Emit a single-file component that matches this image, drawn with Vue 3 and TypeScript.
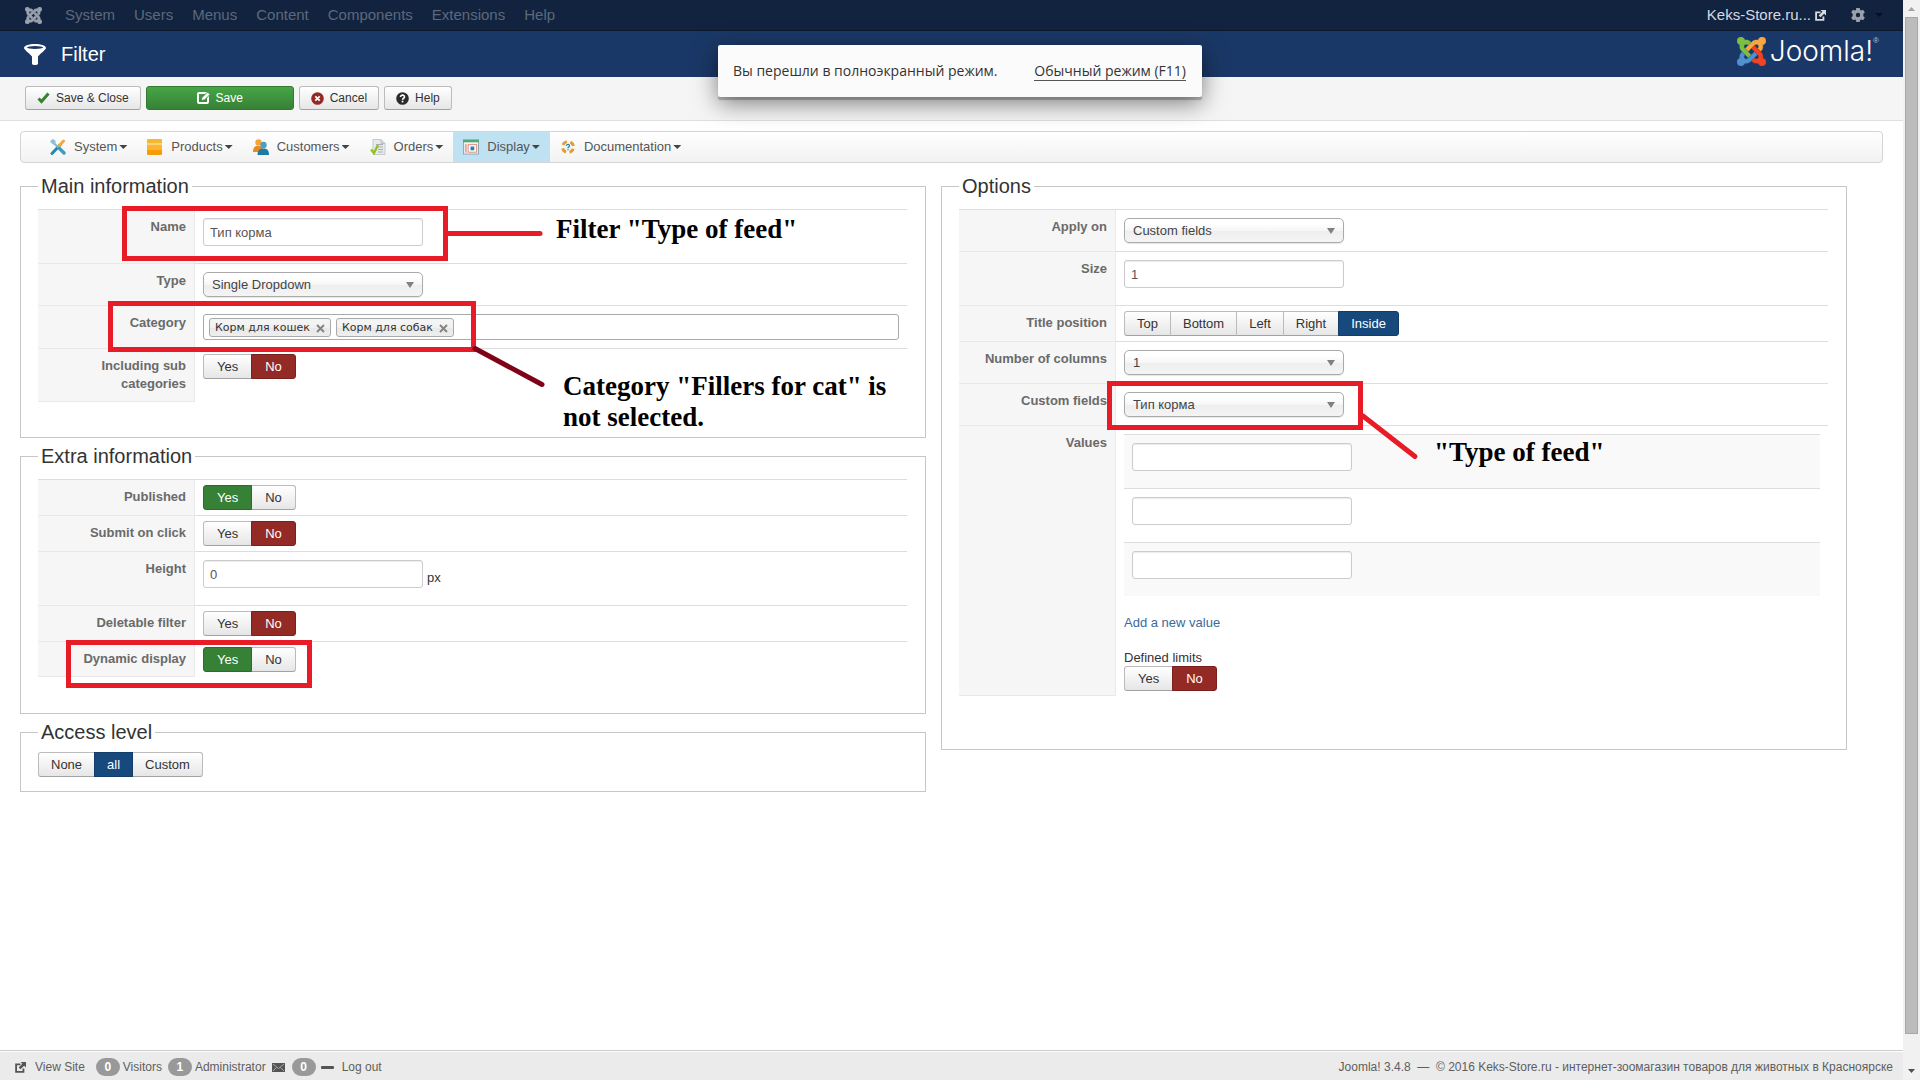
<script setup lang="ts">
import { reactive, ref } from 'vue'

interface MenuItem {
  label: string
  icon: string
  active?: boolean
}

const topNav: string[] = ['System', 'Users', 'Menus', 'Content', 'Components', 'Extensions', 'Help']

const menu: MenuItem[] = [
  { label: 'System', icon: 'tools' },
  { label: 'Products', icon: 'box' },
  { label: 'Customers', icon: 'people' },
  { label: 'Orders', icon: 'order' },
  { label: 'Display', icon: 'window', active: true },
  { label: 'Documentation', icon: 'help' },
]

const yesNo = ['Yes', 'No']
const positions = ['Top', 'Bottom', 'Left', 'Right', 'Inside']
const accessLevels = ['None', 'all', 'Custom']

const form = reactive({
  name: 'Тип корма',
  type: 'Single Dropdown',
  subCategories: 'No',
  published: 'Yes',
  submitOnClick: 'No',
  height: '0',
  deletable: 'No',
  dynamic: 'Yes',
  access: 'all',
  applyOn: 'Custom fields',
  size: '1',
  titlePosition: 'Inside',
  columns: '1',
  customField: 'Тип корма',
  limits: 'No',
})

const categories = ref<string[]>(['Корм для кошек', 'Корм для собак'])
const values = ref<string[]>(['', '', ''])

function removeCategory(name: string): void {
  categories.value = categories.value.filter((c) => c !== name)
}

function tone(option: string): string {
  if (option === 'Yes') return 'green'
  if (option === 'No') return 'red'
  return 'blue'
}
</script>

<template>
  <div class="screen">
    <div class="page">
      <nav class="topbar">
        <a href="#" class="brand" aria-label="Joomla">
          <svg width="17" height="17" viewBox="0 32 448 448" fill="#9aa1ac" stroke="#9aa1ac" stroke-width="16">
            <path d="M.6 92.1C.6 58.8 27.4 32 60.4 32c30 0 54.5 21.9 59.2 50.2 32.6-7.6 67.1.6 96.5 30l-44.3 44.3c-20.5-20.5-42.6-16.3-55.4-3.5-14.3 14.3-14.3 37.9 0 52.2l99.5 99.5-44 44.3c-87.7-87.2-49.7-49.7-99.8-99.7-26.8-26.5-35-64.8-24.8-98.9C20.4 144.6.6 120.7.6 92.1zm129.5 116.4l44.3 44.3c10-10 89.7-89.7 99.7-99.8 14.3-14.3 37.6-14.3 51.9 0 12.8 12.8 17 35-3.5 55.4l44 44.3c31.2-31.2 38.5-67.6 28.9-101.2 29.2-4.1 51.9-29.2 51.9-59.5 0-33.2-26.8-60.1-59.8-60.1-30.3 0-55.4 22.5-59.5 51.6-33.8-9.9-71.7-1.5-98.3 25.1-18.3 19.1-71.1 71.5-99.6 99.9zm266.3 152.2c8.2-32.7-.9-68.5-26.3-93.9-11.8-12.2 5 4.7-99.5-99.7l-44.3 44.3 99.7 99.7c14.3 14.3 14.3 37.6 0 51.9-12.8 12.8-35 17-55.4-3.5l-44 44.3c27.6 30.2 68 38.8 102.7 28 5.5 27.4 29.7 48.1 58.9 48.1 33 0 59.8-26.8 59.8-60.1 0-30.2-22.5-55-51.6-59.1zm-84.3-53.1l-44-44.3c-87 86.4-50.4 50.4-99.7 99.8-14.3 14.3-37.6 14.3-51.9 0-13.1-13.4-16.9-35.3 3.2-55.4l-44-44.3c-30.2 30.2-38 65.2-29.5 98.3-26.7 6-46.2 29.9-46.2 58.2C0 453.2 26.8 480 59.8 480c28.6 0 52.5-19.8 58.6-46.7 32.7 8.2 68.5-.6 94.2-26 32.1-32 12.2-12.4 99.5-99.7z" />
          </svg>
        </a>
        <a v-for="item in topNav" :key="item" href="#" class="topbar-link">{{ item }}</a>
        <div class="topbar-right">
          <a href="#" class="site-link">
            <span>Keks-Store.ru...</span>
            <svg width="11" height="11" viewBox="0 0 12 12">
              <path d="M6 2.5H1.2V10.8H9.2V7" fill="none" stroke="#d6dae0" stroke-width="2" />
              <path d="M6 0H12V6L10 4 6 8 4 6 8 2Z" fill="#d6dae0" />
            </svg>
          </a>
          <button type="button" class="gear" aria-label="Settings">
            <svg width="14" height="14" viewBox="0 0 16 16">
              <path fill="#9aa1ac" fill-rule="evenodd" d="M6 0h4l.4 2.200 1.300.7L13.800 2l2 3.200-1.700 1.400v2.800l1.700 1.400-2 3.200-2.100-.9-1.300.7L10 16H6l-.4-2.200-1.300-.7-2.100.9-2-3.200 1.700-1.400V6.600L.2 5.200l2-3.200 2.100.9 1.300-.7zM8 5.500a2.500 2.500 0 1 0 0 5 2.500 2.500 0 0 0 0-5z" />
            </svg>
            <span class="caret dark"></span>
          </button>
        </div>
      </nav>

      <header class="header">
        <svg width="22" height="21" viewBox="0 0 22 21">
          <path d="M11 0C17 0 22 1.600 22 4c0 1.500-6 6-8 8.500V20c-1 1.300-5 1.300-6 0v-7.500C6 10 0 5.500 0 4 0 1.600 5 0 11 0z" fill="#fff" />
          <ellipse cx="11" cy="3.500" rx="8" ry="1.400" fill="#1a3867" />
        </svg>
        <h1>Filter</h1>
        <div class="logo">
          <svg width="29" height="29" viewBox="0 32 448 448" stroke-width="8">
            <path fill="#7ac143" stroke="#7ac143" d="M.6 92.1C.6 58.800 27.400 32 60.400 32c30 0 54.500 21.900 59.200 50.200 32.600-7.600 67.100.6 96.500 30l-44.300 44.300c-20.500-20.500-42.600-16.300-55.400-3.500-14.300 14.300-14.300 37.900 0 52.200l99.500 99.500-44 44.300c-87.700-87.200-49.700-49.700-99.800-99.700-26.800-26.500-35-64.800-24.800-98.900C20.400 144.600.6 120.700.6 92.100z" />
            <path fill="#f9a541" stroke="#f9a541" d="M130.100 208.500l44.300 44.300c10-10 89.700-89.700 99.700-99.800 14.300-14.300 37.600-14.300 51.900 0 12.800 12.800 17 35-3.500 55.400l44 44.300c31.200-31.200 38.500-67.600 28.900-101.200 29.200-4.100 51.900-29.200 51.900-59.500 0-33.200-26.800-60.100-59.800-60.100-30.300 0-55.400 22.500-59.500 51.600-33.800-9.900-71.700-1.500-98.300 25.100-18.300 19.100-71.100 71.500-99.600 99.900z" />
            <path fill="#f44321" stroke="#f44321" d="M396.400 360.700c8.200-32.700-.9-68.500-26.300-93.900-11.800-12.200 5 4.700-99.500-99.700l-44.300 44.300 99.700 99.700c14.300 14.300 14.300 37.600 0 51.900-12.800 12.800-35 17-55.400-3.500l-44 44.300c27.600 30.200 68 38.800 102.700 28 5.500 27.400 29.700 48.100 58.900 48.100 33 0 59.800-26.800 59.800-60.100 0-30.200-22.500-55-51.600-59.100z" />
            <path fill="#5091cd" stroke="#5091cd" d="M312.100 307.600l-44-44.300c-87 86.400-50.400 50.400-99.700 99.800-14.300 14.300-37.600 14.300-51.900 0-13.100-13.400-16.900-35.300 3.200-55.400l-44-44.300c-30.200 30.200-38 65.200-29.500 98.300-26.700 6-46.200 29.900-46.200 58.200C0 453.200 26.800 480 59.800 480c28.600 0 52.500-19.800 58.600-46.700 32.700 8.200 68.500-.6 94.200-26 32.100-32 12.200-12.400 99.500-99.700z" />
          </svg>
          <span class="wordmark">Joomla!</span><span class="reg">®</span>
        </div>
      </header>

      <div class="toolbar">
        <button type="button" class="tool">
          <svg width="13" height="12" viewBox="0 0 13 12"><path d="M1.500 6.500L4.500 9.500 11.500 1.500" fill="none" stroke="#378137" stroke-width="3" /></svg>
          Save &amp; Close
        </button>
        <button type="button" class="tool primary">
          <svg width="13" height="12" viewBox="0 0 13 12">
            <rect x="1" y="1" width="10" height="10" rx="1" fill="none" stroke="#fff" stroke-width="2" />
            <path d="M4 8.500L5 5.500 10.500 0 13 2.500 7.500 8Z" fill="#fff" stroke="#3d943d" stroke-width="1" />
          </svg>
          Save
        </button>
        <button type="button" class="tool">
          <svg width="13" height="13" viewBox="0 0 13 13"><circle cx="6.500" cy="6.500" r="6.300" fill="#942a25" /><path d="M4.300 4.300L8.700 8.700M8.700 4.300L4.300 8.700" stroke="#fff" stroke-width="1.700" /></svg>
          Cancel
        </button>
        <button type="button" class="tool">
          <svg width="13" height="13" viewBox="0 0 13 13"><circle cx="6.500" cy="6.500" r="6.300" fill="#2b2b2b" /><path d="M4.500 5C4.500 2.500 8.600 2.600 8.500 5 8.500 6.300 6.600 6.200 6.600 7.700" fill="none" stroke="#fff" stroke-width="1.600" /><rect x="5.700" y="8.700" width="1.700" height="1.700" fill="#fff" /></svg>
          Help
        </button>
      </div>

      <nav class="menu">
        <a v-for="item in menu" :key="item.label" href="#" class="menu-item" :class="{ active: item.active }">
          <svg v-if="item.icon === 'tools'" width="16" height="16" viewBox="0 0 16 16">
            <path d="M2 14.500L10 6" stroke="#1d8ab5" stroke-width="3" stroke-linecap="round" />
            <path d="M9 7L13.500 2" stroke="#f2a93b" stroke-width="3" stroke-linecap="round" />
            <path d="M3 3.500L9 9" stroke="#7fb6cf" stroke-width="2" />
            <path d="M0 2.500L2.500 0 5.500 1.500 5.500 4.500 3 5.500Z" fill="#8cc0d6" />
            <path d="M9.500 9.500L14 14" stroke="#3d9cc2" stroke-width="3.400" stroke-linecap="round" />
          </svg>
          <svg v-else-if="item.icon === 'box'" width="16" height="16" viewBox="0 0 16 16">
            <rect y="0" width="15" height="5" rx="1" fill="#f7b733" />
            <rect y="4" width="15" height="12" rx="1" fill="#f59c0b" />
            <rect y="4" width="15" height="2" fill="#fbd37b" />
            <rect y="6" width="15" height="5" fill="#fbb52e" />
          </svg>
          <svg v-else-if="item.icon === 'people'" width="16" height="16" viewBox="0 0 16 16">
            <circle cx="5.500" cy="3.500" r="3.200" fill="#f5a33a" />
            <path d="M0 13C0 8 2 7 5 7s5 1 5 6z" fill="#e98a1c" />
            <circle cx="10.500" cy="6" r="3.200" fill="#4b9fc0" />
            <path d="M4.500 16C4.500 11 7 9.500 10.500 9.500S16 11 16 16z" fill="#1b7ba3" />
          </svg>
          <svg v-else-if="item.icon === 'order'" width="16" height="16" viewBox="0 0 16 16">
            <path d="M3 .5H11L15 4.500V15.500H3Z" fill="#e7eaec" stroke="#c4cacd" />
            <path d="M11 .5V4.500H15" fill="#cfd5d9" stroke="#b9bfc4" />
            <path d="M6 5.500H13M6 8H13M8 10.500H13M8 13H13" stroke="#a5adb3" />
            <path d="M1 10.500L4 14 8 6" fill="none" stroke="#8fc31f" stroke-width="2.400" />
          </svg>
          <svg v-else-if="item.icon === 'window'" width="16" height="16" viewBox="0 0 17 16">
            <rect x=".5" y="1.500" width="16" height="14" fill="#eef3f5" stroke="#8fa5af" />
            <rect x="0" y="0" width="17" height="3" fill="#57a773" />
            <rect x="2" y="5" width="2" height="9" fill="#e9a79c" />
            <rect x="5.500" y="5.500" width="9" height="8" fill="#fff" stroke="#df8a80" />
            <rect x="8" y="7.500" width="4" height="4" fill="#1f86b0" />
          </svg>
          <svg v-else width="16" height="16" viewBox="0 0 16 16">
            <circle cx="8" cy="8" r="5.500" fill="none" stroke="#e79a2e" stroke-width="3" stroke-dasharray="5 3.640" stroke-dashoffset="-1.800" />
            <circle cx="8" cy="8" r="3.400" fill="#e6f1f7" />
            <path d="M6.500 6.800C6.500 5 9.500 5 9.500 6.800 9.500 8 8 7.800 8 9.200M8 10.200v1" fill="none" stroke="#2c7fb0" stroke-width="1.200" />
          </svg>
          <span>{{ item.label }}</span>
          <span class="caret"></span>
        </a>
      </nav>

      <main class="columns">
        <div class="column">
          <section class="panel">
            <fieldset>
              <legend>Main information</legend>
              <table class="form">
                <tbody>
                  <tr>
                    <td class="key"><label for="name">Name</label></td>
                    <td><input id="name" v-model="form.name" type="text" class="field spaced" /></td>
                  </tr>
                  <tr>
                    <td class="key"><label for="type">Type</label></td>
                    <td>
                      <span class="select"><select id="type" v-model="form.type"><option>Single Dropdown</option></select></span>
                    </td>
                  </tr>
                  <tr>
                    <td class="key"><label for="category">Category</label></td>
                    <td>
                      <div class="tags">
                        <span v-for="c in categories" :key="c" class="tag">
                          {{ c }}
                          <button type="button" :aria-label="'Remove ' + c" @click="removeCategory(c)">
                            <svg width="9" height="9" viewBox="0 0 9 9"><path d="M1 1L8 8M8 1L1 8" stroke="#858585" stroke-width="2" /></svg>
                          </button>
                        </span>
                        <input id="category" type="text" />
                      </div>
                    </td>
                  </tr>
                  <tr>
                    <td class="key"><span>Including sub categories</span></td>
                    <td class="radios">
                      <div class="group yes-no" role="radiogroup" aria-label="Including sub categories">
                        <label v-for="o in yesNo" :key="o" class="btn" :class="form.subCategories === o && tone(o)">
                          <input v-model="form.subCategories" type="radio" name="sub" :value="o" />{{ o }}
                        </label>
                      </div>
                    </td>
                  </tr>
                </tbody>
              </table>
            </fieldset>
            <svg class="marks" width="600" height="230" viewBox="0 0 600 230" fill="none" stroke-width="5">
              <rect x="104.500" y="40.500" width="321" height="50" stroke="#e81c26" />
              <path d="M428 65.500H520" stroke="#e81c26" stroke-linecap="round" />
              <rect x="90.500" y="135.500" width="363" height="46" stroke="#e81c26" />
              <path d="M455 180.500L522 216.500" stroke="#7f0218" stroke-linecap="round" />
            </svg>
            <p class="note note-name">Filter "Type of feed"</p>
            <p class="note note-category">Category "Fillers for cat" is<br />not selected.</p>
          </section>

          <section class="panel">
            <fieldset class="extra">
              <legend>Extra information</legend>
              <table class="form">
                <tbody>
                  <tr>
                    <td class="key"><span>Published</span></td>
                    <td class="radios">
                      <div class="group yes-no" role="radiogroup" aria-label="Published">
                        <label v-for="o in yesNo" :key="o" class="btn" :class="form.published === o && tone(o)">
                          <input v-model="form.published" type="radio" name="published" :value="o" />{{ o }}
                        </label>
                      </div>
                    </td>
                  </tr>
                  <tr>
                    <td class="key"><span>Submit on click</span></td>
                    <td class="radios">
                      <div class="group yes-no" role="radiogroup" aria-label="Submit on click">
                        <label v-for="o in yesNo" :key="o" class="btn" :class="form.submitOnClick === o && tone(o)">
                          <input v-model="form.submitOnClick" type="radio" name="submit" :value="o" />{{ o }}
                        </label>
                      </div>
                    </td>
                  </tr>
                  <tr>
                    <td class="key"><label for="height">Height</label></td>
                    <td>
                      <div class="unit"><input id="height" v-model="form.height" type="text" class="field spaced" /><span>px</span></div>
                    </td>
                  </tr>
                  <tr>
                    <td class="key"><span>Deletable filter</span></td>
                    <td class="radios">
                      <div class="group yes-no" role="radiogroup" aria-label="Deletable filter">
                        <label v-for="o in yesNo" :key="o" class="btn" :class="form.deletable === o && tone(o)">
                          <input v-model="form.deletable" type="radio" name="deletable" :value="o" />{{ o }}
                        </label>
                      </div>
                    </td>
                  </tr>
                  <tr>
                    <td class="key"><span>Dynamic display</span></td>
                    <td class="radios">
                      <div class="group yes-no" role="radiogroup" aria-label="Dynamic display">
                        <label v-for="o in yesNo" :key="o" class="btn" :class="form.dynamic === o && tone(o)">
                          <input v-model="form.dynamic" type="radio" name="dynamic" :value="o" />{{ o }}
                        </label>
                      </div>
                    </td>
                  </tr>
                </tbody>
              </table>
            </fieldset>
            <svg class="marks" width="400" height="260" viewBox="0 0 400 260" fill="none" stroke-width="5">
              <rect x="48.500" y="204.500" width="241" height="43" stroke="#e81c26" />
            </svg>
          </section>

          <section class="panel">
            <fieldset class="access">
              <legend>Access level</legend>
              <div class="group" role="radiogroup" aria-label="Access level">
                <label v-for="o in accessLevels" :key="o" class="btn" :class="form.access === o && tone(o)">
                  <input v-model="form.access" type="radio" name="access" :value="o" />{{ o }}
                </label>
              </div>
            </fieldset>
          </section>
        </div>

        <div class="column">
          <section class="panel">
            <fieldset class="options">
              <legend>Options</legend>
              <table class="form">
                <tbody>
                  <tr>
                    <td class="key"><label for="apply">Apply on</label></td>
                    <td>
                      <span class="select"><select id="apply" v-model="form.applyOn"><option>Custom fields</option></select></span>
                    </td>
                  </tr>
                  <tr>
                    <td class="key"><label for="size">Size</label></td>
                    <td><input id="size" v-model="form.size" type="text" class="field spaced" /></td>
                  </tr>
                  <tr>
                    <td class="key"><span>Title position</span></td>
                    <td class="radios">
                      <div class="group" role="radiogroup" aria-label="Title position">
                        <label v-for="o in positions" :key="o" class="btn" :class="form.titlePosition === o && tone(o)">
                          <input v-model="form.titlePosition" type="radio" name="position" :value="o" />{{ o }}
                        </label>
                      </div>
                    </td>
                  </tr>
                  <tr>
                    <td class="key"><label for="cols">Number of columns</label></td>
                    <td>
                      <span class="select"><select id="cols" v-model="form.columns"><option>1</option></select></span>
                    </td>
                  </tr>
                  <tr>
                    <td class="key"><label for="custom">Custom fields</label></td>
                    <td>
                      <span class="select"><select id="custom" v-model="form.customField"><option>Тип корма</option></select></span>
                    </td>
                  </tr>
                  <tr>
                    <td class="key"><span>Values</span></td>
                    <td class="values-cell">
                      <table class="values">
                        <tbody>
                          <tr v-for="(_, i) in values" :key="i">
                            <td><input v-model="values[i]" type="text" class="field spaced" :aria-label="'Value ' + (i + 1)" /></td>
                          </tr>
                        </tbody>
                      </table>
                      <a href="#" class="add">Add a new value</a>
                      <div class="limits">Defined limits</div>
                      <div class="group yes-no" role="radiogroup" aria-label="Defined limits">
                        <label v-for="o in yesNo" :key="o" class="btn" :class="form.limits === o && tone(o)">
                          <input v-model="form.limits" type="radio" name="limits" :value="o" />{{ o }}
                        </label>
                      </div>
                    </td>
                  </tr>
                </tbody>
              </table>
            </fieldset>
            <svg class="marks" width="600" height="320" viewBox="0 0 600 320" fill="none" stroke="#e81c26" stroke-width="5">
              <rect x="168.500" y="215.500" width="251" height="44" />
              <path d="M422 248L474 288.500" stroke-linecap="round" />
            </svg>
            <p class="note note-field">"Type of feed"</p>
          </section>
        </div>
      </main>

      <footer class="footer">
        <a href="#" class="view">
          <svg width="11" height="11" viewBox="0 0 12 12">
            <path d="M6 2.500H1.200V10.800H9.200V7" fill="none" stroke="#555" stroke-width="2" />
            <path d="M6 0H12V6L10 4 6 8 4 6 8 2Z" fill="#555" />
          </svg>
          View Site
        </a>
        <span class="badge">0</span><span class="after-badge">Visitors</span>
        <span class="badge">1</span><span class="after-badge">Administrator</span>
        <svg width="13" height="9" viewBox="0 0 13 9"><rect width="13" height="9" fill="#555" /><path d="M1 1L6.500 5.500 12 1M1 8L4.500 4.500M12 8L8.500 4.500" fill="none" stroke="#bbb" stroke-width=".8" /></svg>
        <span class="badge mail">0</span>
        <svg width="13" height="3" viewBox="0 0 13 3"><rect width="13" height="3" rx="1" fill="#555" /></svg>
        <a href="#" class="logout">Log out</a>
        <span class="copyright">Joomla! 3.4.8 &nbsp;—&nbsp; © 2016 Keks-Store.ru - интернет-зоомагазин товаров для животных в Красноярске</span>
      </footer>
    </div>

    <div class="scrollbar">
      <svg width="17" height="17" viewBox="0 0 17 17"><path d="M5 11L8.500 7 12 11Z" fill="#a3a3a3" /></svg>
      <div class="thumb"></div>
      <svg width="17" height="17" viewBox="0 0 17 17"><path d="M5 6L8.500 10 12 6Z" fill="#505050" /></svg>
    </div>

    <div class="toast" role="status">
      <span>Вы перешли в полноэкранный режим.</span>
      <a href="#">Обычный режим (F11)</a>
    </div>
  </div>
</template>

<style>
body {
  background: #fff;
}
</style>

<style scoped>
.screen {
  position: relative;
  display: flex;
  min-height: 100vh;
  font: 13px/18px "Liberation Sans", Arial, sans-serif;
  color: #333;
}
.screen *,
.screen *::before,
.screen *::after {
  box-sizing: border-box;
}
.page {
  flex: 1;
  min-width: 0;
  display: flex;
  flex-direction: column;
}
a {
  text-decoration: none;
  color: inherit;
}
button,
input,
select {
  font: inherit;
  color: inherit;
  margin: 0;
}
svg {
  flex: none;
}
.caret {
  width: 8px;
  height: 4px;
  background: #444;
  clip-path: polygon(0 0, 100% 0, 50% 100%);
}
.caret.dark {
  background: #08101f;
}

.topbar {
  display: flex;
  align-items: center;
  gap: 19px;
  height: 31px;
  padding: 0 20px 0 25px;
  background: #12233f;
  border-bottom: 1px solid #0c182c;
  font-size: 15px;
  color: #5c697c;
}
.brand {
  display: flex;
  margin-right: 4px;
}
.topbar-right {
  display: flex;
  align-items: center;
  gap: 25px;
  margin-left: auto;
  color: #d6dae0;
}
.site-link {
  display: flex;
  align-items: center;
  gap: 4px;
}
.gear {
  display: flex;
  align-items: center;
  gap: 10px;
  padding: 0;
  border: 0;
  background: none;
}

.header {
  display: flex;
  align-items: center;
  height: 46px;
  padding: 0 24px;
  background: #1a3867;
  color: #fff;
}
.header h1 {
  margin: 0 0 0 15px;
  font-size: 20px;
  font-weight: 400;
  line-height: 30px;
}
.logo {
  display: flex;
  align-items: center;
  height: 38px;
  margin: 0 0 6px auto;
}
.wordmark {
  margin-left: 4px;
  font: 300 28px/30px Inter, sans-serif;
}
.reg {
  align-self: flex-start;
  font-size: 8px;
  color: #b6c2d6;
}

.toolbar {
  display: flex;
  gap: 5px;
  height: 44px;
  padding: 9px 25px 0;
  background: #f5f5f5;
  border-bottom: 1px solid #e0e0e0;
}
.tool {
  display: flex;
  align-items: center;
  justify-content: center;
  gap: 6px;
  height: 24px;
  padding: 0 11px;
  border: 1px solid #bbb;
  border-bottom-color: #a2a2a2;
  border-radius: 3px;
  background: linear-gradient(#fff, #e6e6e6);
  font-size: 12px;
}
.tool.primary {
  width: 148px;
  border-color: #2f7a2f;
  background: linear-gradient(#46a546, #378137);
  color: #fff;
}

.menu {
  display: flex;
  height: 32px;
  margin: 10px 20px 5px;
  padding: 0 19px;
  border: 1px solid #d4d4d4;
  border-radius: 4px;
  background: linear-gradient(#fff, #f2f2f2);
}
.menu-item {
  display: flex;
  align-items: center;
  gap: 2px;
  padding: 0 10px;
  color: #555;
}
.menu-item svg {
  margin-right: 6px;
}
.menu-item.active {
  background: #bfe2f3;
}

.columns {
  display: grid;
  grid-template-columns: 1fr 1fr;
  gap: 15px;
  padding: 0 56px 0 20px;
}
.panel {
  position: relative;
}
fieldset {
  min-width: 0;
  margin: 0;
  padding: 5px 18px 35px 17px;
  border: 1px solid #c6c6c6;
}
fieldset.extra {
  padding-bottom: 36px;
}
fieldset.access {
  padding-top: 2px;
  padding-bottom: 14px;
}
fieldset.options {
  padding-bottom: 53px;
}
legend {
  padding: 0 3px;
  font-size: 20px;
  line-height: 36px;
}

.form {
  width: 100%;
  border-spacing: 0;
}
.form td {
  padding: 8px;
  border-top: 1px solid #ddd;
  vertical-align: top;
}
.form td.key {
  width: 157px;
  border-top-color: #e9e9e9;
  border-right: 1px solid #e9e9e9;
  background: #f6f6f6;
  color: #6a6a6a;
  font-weight: 700;
  text-align: right;
}
.form tr:first-child td.key {
  border-top-color: #ddd;
}
.form tr:last-child td.key {
  border-bottom: 1px solid #e9e9e9;
}
.form td.radios {
  padding-top: 5px;
  padding-bottom: 5px;
}
.form td.values-cell {
  padding-bottom: 5px;
}
.field {
  display: block;
  width: 220px;
  height: 28px;
  padding: 0 6px;
  border: 1px solid #ccc;
  border-radius: 3px;
  background: #fff;
  box-shadow: inset 0 1px 1px rgba(0, 0, 0, 0.08);
  color: #555;
}
.spaced {
  margin-bottom: 9px;
}
.unit {
  display: flex;
  gap: 4px;
}
.unit span {
  padding-top: 9px;
}
.select {
  position: relative;
  display: block;
  width: 220px;
}
.select select {
  display: block;
  width: 100%;
  height: 25px;
  padding: 0 24px 0 8px;
  appearance: none;
  border: 1px solid #aaa;
  border-radius: 5px;
  background: linear-gradient(#fff 20%, #f6f6f6 50%, #eee 52%, #f4f4f4);
  box-shadow: 0 1px 1px rgba(0, 0, 0, 0.1);
  color: #444;
}
.select::after {
  content: "";
  position: absolute;
  top: 10px;
  right: 9px;
  width: 8px;
  height: 6px;
  background: #808080;
  clip-path: polygon(0 0, 100% 0, 50% 100%);
  pointer-events: none;
}
.tags {
  display: flex;
  align-items: center;
  gap: 5px;
  height: 26px;
  padding: 0 5px;
  border: 1px solid #aaa;
  border-radius: 3px;
}
.tags input {
  flex: 1;
  min-width: 0;
  padding: 0;
  border: 0;
  outline: 0;
  background: none;
}
.tag {
  display: flex;
  align-items: center;
  gap: 6px;
  height: 19px;
  padding: 0 5px;
  border: 1px solid #aaa;
  border-radius: 3px;
  background: linear-gradient(#f4f4f4 20%, #f0f0f0 50%, #e8e8e8 52%, #eee);
  font: 11px/13px "DejaVu Sans", Verdana, sans-serif;
}
.tag button {
  display: flex;
  padding: 2px 0 0;
  border: 0;
  background: none;
}
.group {
  display: flex;
}
.btn {
  position: relative;
  height: 25px;
  padding: 0 12px;
  border: 1px solid #bbb;
  border-bottom-color: #a2a2a2;
  background: linear-gradient(#fff, #e6e6e6);
  line-height: 23px;
}
.yes-no .btn {
  padding: 0 13px;
}
.btn + .btn {
  margin-left: -1px;
}
.btn:first-child {
  border-radius: 3px 0 0 3px;
}
.btn:last-child {
  border-radius: 0 3px 3px 0;
}
.btn input {
  position: absolute;
  opacity: 0;
  pointer-events: none;
}
.btn.green {
  border-color: #2c6b2c;
  background: #378137;
  color: #fff;
  z-index: 1;
}
.btn.red {
  border-color: #7b211d;
  background: #942a25;
  color: #fff;
  z-index: 1;
}
.btn.blue {
  border-color: #123d68;
  background: #17497c;
  color: #fff;
  z-index: 1;
}
.values {
  width: 100%;
  margin-bottom: 18px;
  border-spacing: 0;
}
.values tr:nth-child(odd) td {
  background: #f9f9f9;
}
.add {
  display: block;
  margin-bottom: 18px;
  color: #3a6a9c;
}
.limits {
  line-height: 16px;
}

.marks {
  position: absolute;
  top: 0;
  left: 0;
  z-index: 2;
  pointer-events: none;
}
.note {
  position: absolute;
  z-index: 2;
  margin: 0;
  font: 700 27px/31px "Liberation Serif", "Times New Roman", serif;
  color: #000;
  white-space: nowrap;
}
.note-name {
  top: 46px;
  left: 536px;
}
.note-category {
  top: 203px;
  left: 543px;
}
.note-field {
  top: 269px;
  left: 493px;
}

.footer {
  display: flex;
  align-items: center;
  height: 30px;
  margin-top: auto;
  padding: 3px 10px 0 15px;
  border-top: 1px solid #ccc;
  background: #ebebeb;
  box-shadow: inset 0 1px 0 #fff;
  font-size: 12px;
  color: #5e5e5e;
}
.view {
  display: flex;
  align-items: center;
  gap: 9px;
  margin-right: 11px;
}
.badge {
  width: 24px;
  height: 18px;
  border-radius: 9px;
  background: #999;
  color: #fff;
  font-weight: 700;
  line-height: 18px;
  text-align: center;
}
.after-badge {
  margin: 0 6px 0 3px;
}
.badge.mail {
  margin: 0 5px 0 7px;
}
.logout {
  margin-left: 8px;
}
.copyright {
  margin-left: auto;
}

.scrollbar {
  display: flex;
  flex-direction: column;
  width: 17px;
  background: #f1f1f1;
}
.thumb {
  flex: 1;
  margin: 0 2px 29px;
  border: 1px solid #a8a8a8;
  background: #bcbcbc;
}

.toast {
  position: absolute;
  top: 45px;
  left: 50%;
  z-index: 5;
  display: flex;
  align-items: center;
  justify-content: space-between;
  width: 484px;
  height: 52px;
  padding: 0 16px 0 15px;
  transform: translateX(-50%);
  border-radius: 2px;
  background: #fbfbfb;
  box-shadow: 0 3px 1px rgba(0, 0, 0, 0.22), 0 6px 24px rgba(0, 0, 0, 0.5);
  font: 14px/20px "Open Sans", "Noto Sans", sans-serif;
  color: #333;
  white-space: nowrap;
}
.toast a {
  border-bottom: 1px solid #555;
  line-height: 18px;
}
</style>
